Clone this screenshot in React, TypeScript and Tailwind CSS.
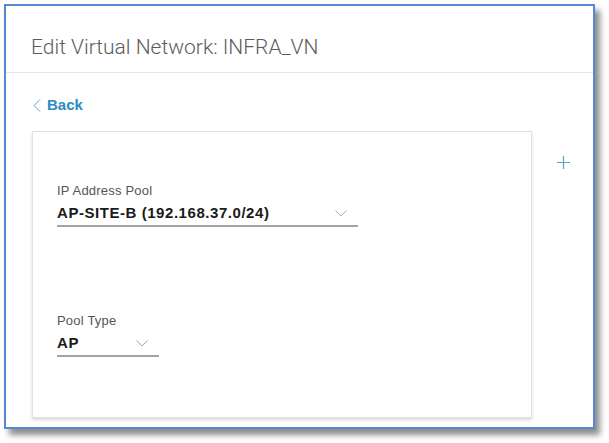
import React from 'react';

function Chevron({ className }: { className?: string }) {
  return (
    <svg width="12" height="7" viewBox="0 0 12 7" fill="none" className={className}>
      <path d="M0.5 0.5 L6 6 L11.5 0.5" stroke="#a9a9a9" strokeWidth="1" />
    </svg>
  );
}

function SelectField({ label, value, width }: { label: string; value: string; width: string }) {
  return (
    <div className={`flex flex-col ${width}`}>
      <div className="text-[13px] leading-[16px] tracking-[0.2px] text-[#555555]">{label}</div>
      <div className="mt-[2px] flex h-[26px] items-center justify-between border-b-2 border-[#a3a3a3] pr-[11px]">
        <span className="text-[15px] font-bold leading-[20px] tracking-[0.55px] text-[#1a1a1a]">{value}</span>
        <Chevron />
      </div>
    </div>
  );
}

export default function App() {
  return (
    <div className="h-[443px] w-[609px] bg-white pl-[4px] pt-[4px] font-['Liberation_Sans',Arial,sans-serif]">
      <div className="flex h-[425px] w-[591px] flex-col border-2 border-[#5589cf] bg-white shadow-[5px_6px_6px_rgba(0,0,0,0.45)]">
        {/* header */}
        <div className="h-[67px] border-b border-[#e6e6e6] pl-[25px] pt-[30px]">
          <h1 className="font-['Roboto',sans-serif] text-[21px] font-light leading-[22px] text-[#5c5c5c]">
            Edit Virtual Network: INFRA_VN
          </h1>
        </div>

        <div className="pl-[27px] pt-[22px]">
          <a className="flex items-center gap-[6px] text-[15px] font-bold leading-[20px] text-[#2a8cc0]">
            <svg width="8" height="13" viewBox="0 0 8 13" fill="none">
              <path d="M7 0.5 L1 6.5 L7 12.5" stroke="#5aa3c8" strokeWidth="1" />
            </svg>
            Back
          </a>
        </div>

        <div className="mt-[16px] flex pl-[26px]">
          <div className="flex h-[287px] w-[500px] flex-col border border-[#e2e2e2] pl-[24px] pt-[51px] shadow-[0_2px_3px_rgba(0,0,0,0.15)]">
            <SelectField label="IP Address Pool" value="AP-SITE-B (192.168.37.0/24)" width="w-[301px]" />
            <div className="mt-[86px]">
              <SelectField label="Pool Type" value="AP" width="w-[102px]" />
            </div>
          </div>
          <div className="ml-[25px] mt-[25px]">
            <svg width="13" height="13" viewBox="0 0 13 13" fill="none">
              <path d="M6.5 0 V13 M0 6.5 H13" stroke="#5aa3c8" strokeWidth="1.2" />
            </svg>
          </div>
        </div>
      </div>
    </div>
  );
}
